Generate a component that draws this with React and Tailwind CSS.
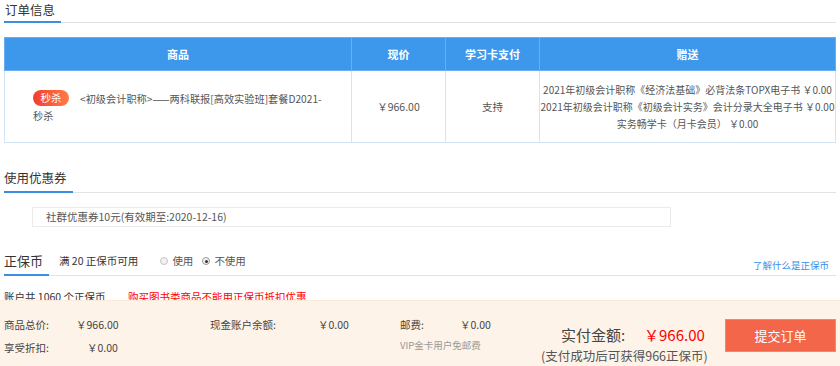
export default function App() {
  const gifts = [
    '2021年初级会计职称《经济法基础》必背法条TOPX电子书 ￥0.00',
    '2021年初级会计职称《初级会计实务》会计分录大全电子书 ￥0.00',
    '实务畅学卡（月卡会员） ￥0.00',
  ]

  return (
    <div className="relative h-[366px] overflow-hidden bg-white text-[10px] text-[#333] font-['Noto_Sans_CJK_SC','Microsoft_YaHei',sans-serif]">
      <div className="pl-1 pr-[4px]">
        {/* 订单信息 */}
        <div className="flex border-b border-[#e3e3e3]">
          <span className="-mb-px border-b-2 border-[#3b8fe0] pb-px pl-px pr-[6px] text-[12.5px] leading-[20px]">订单信息</span>
        </div>

        <table className="mt-[14px] w-[832px] table-fixed border-collapse text-center">
          <thead>
            <tr className="h-[33px] bg-[#3d98ec] text-[11px] font-bold text-white">
              <th className="w-[347px] border border-[#6aaef0]">商品</th>
              <th className="w-[94px] border border-[#6aaef0]">现价</th>
              <th className="w-[94px] border border-[#6aaef0]">学习卡支付</th>
              <th className="border border-[#6aaef0]">赠送</th>
            </tr>
          </thead>
          <tbody>
            <tr className="h-[72px]">
              <td className="border border-[#d3e4f5] pl-[28px] pr-[10px] text-left text-[10.2px] leading-[17px] text-[#555]">
                <span className="mr-[11px] inline-block h-[16px] w-[36px] rounded-full bg-gradient-to-r from-[#f33a2e] to-[#ff7b47] text-center align-[1px] text-[10.5px] leading-[16px] text-white">秒杀</span>
                &lt;初级会计职称&gt;——两科联报[高效实验班]套餐D2021-
                <br />
                秒杀
              </td>
              <td className="border border-[#d3e4f5] text-[10.5px] text-[#555]">￥966.00</td>
              <td className="border border-[#d3e4f5] text-[10.5px] text-[#555]">支持</td>
              <td className="border border-[#d3e4f5] text-[10px] leading-[17px] text-[#555]">
                {gifts.map((g) => (
                  <div key={g} className="whitespace-nowrap">{g}</div>
                ))}
              </td>
            </tr>
          </tbody>
        </table>

        {/* 使用优惠券 */}
        <div className="mt-[25px] flex border-b border-[#e3e3e3]">
          <span className="-mb-px border-b-2 border-[#3b8fe0] pb-[3px] pr-[6px] text-[12.5px] leading-[20px]">使用优惠券</span>
        </div>
        <div className="ml-[28px] mt-[14px] h-[20px] w-[639px] border border-[#ebebeb] pl-[13px] text-[10.5px] leading-[18px] text-[#555]">
          社群优惠券10元(有效期至:2020-12-16)
        </div>

        {/* 正保币 */}
        <div className="mt-[23px] flex items-start border-b border-[#e3e3e3]">
          <span className="-mb-px border-b-2 border-[#3b8fe0] pb-[2px] pr-[6px] text-[13px] leading-[22px]">正保币</span>
          <span className="ml-[10px] text-[10.5px] leading-[22px]">满 20 正保币可用</span>
          <label className="ml-[22px] flex h-[22px] items-center gap-[4px] text-[10.5px] text-[#555]">
            <span className="h-[8px] w-[8px] rounded-full border border-[#c4c4c4] bg-[#f2f2f2]"></span>
            使用
          </label>
          <label className="ml-[9px] flex h-[22px] items-center gap-[4px] text-[10.5px] text-[#555]">
            <span className="flex h-[8px] w-[8px] items-center justify-center rounded-full border border-[#9a9a9a] bg-[#f2f2f2]">
              <span className="h-[3px] w-[3px] rounded-full bg-[#333]"></span>
            </span>
            不使用
          </label>
          <a className="ml-auto mr-[7px] mt-[6px] text-[9.5px] leading-[18px] text-[#3a8ee6]">了解什么是正保币</a>
        </div>
        <div className="mt-[12px] flex text-[10.5px] leading-[18px]">
          <span className="w-[124px]">账户共 1060 个正保币</span>
          <span className="text-[#f00]">购买图书类商品不能用正保币抵扣优惠</span>
        </div>
      </div>

      {/* 底部结算栏 */}
      <div className="absolute bottom-0 left-0 right-0 flex h-[66px] border-t border-[#fbebdb] bg-[#fef3e8] text-[10.5px] text-[#444]">
        <div className="flex w-[210px] flex-col gap-[5px] pl-1 pt-[15px] leading-[18px]">
          <div className="flex">
            <span className="w-[72px]">商品总价:</span>
            <span>￥966.00</span>
          </div>
          <div className="flex">
            <span className="w-[83px]">享受折扣:</span>
            <span>￥0.00</span>
          </div>
        </div>
        <div className="flex w-[190px] pt-[15px] leading-[18px]">
          <span className="w-[108px]">现金账户余额:</span>
          <span>￥0.00</span>
        </div>
        <div className="flex w-[141px] flex-col pt-[15px] leading-[18px]">
          <div className="flex">
            <span className="w-[60px]">邮费:</span>
            <span>￥0.00</span>
          </div>
          <span className="mt-[2px] text-[9.5px] text-[#999]">VIP金卡用户免邮费</span>
        </div>
        <div className="flex flex-col pt-[23px]">
          <div className="flex items-baseline pl-[20px] text-[15px] leading-[22px] text-[#444]">
            <span className="w-[83px]">实付金额:</span>
            <span className="text-[#f00]">￥966.00</span>
          </div>
          <span className="text-[12.5px] leading-[20px] text-[#555]">(支付成功后可获得966正保币)</span>
        </div>
        <div className="ml-auto mr-[4px] pt-[18px]">
          <button className="h-[33px] w-[111px] border border-[#f7846b] bg-[#f3664a] text-[13px] text-white">提交订单</button>
        </div>
      </div>
    </div>
  )
}
